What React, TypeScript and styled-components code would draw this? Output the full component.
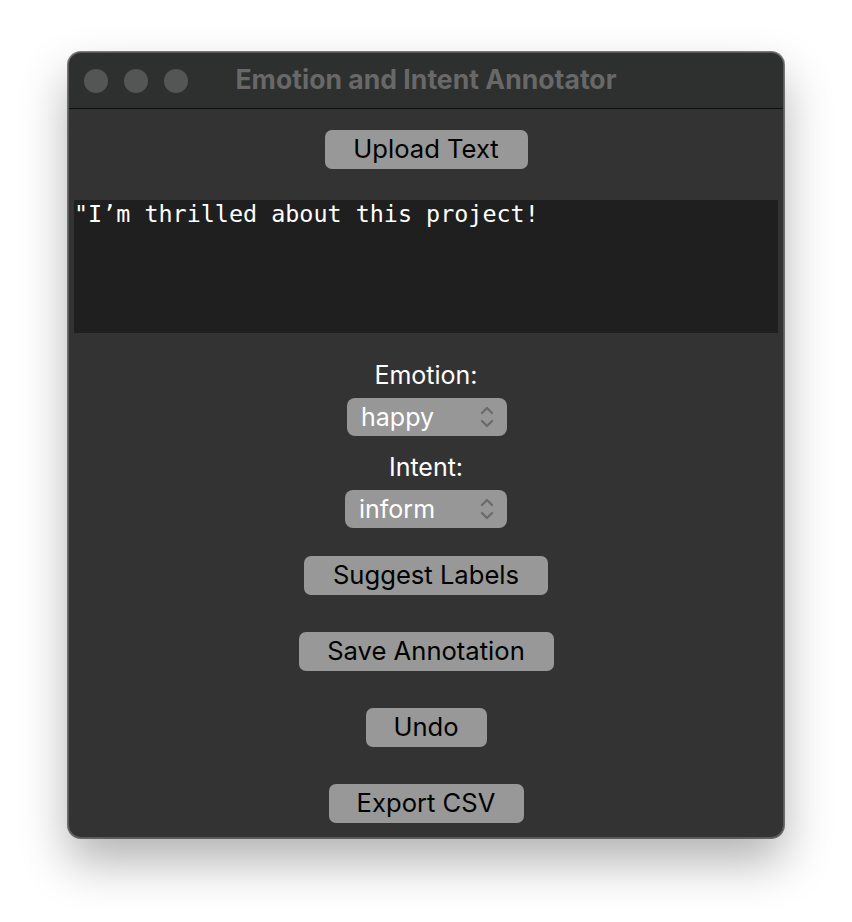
import styled, { createGlobalStyle } from "styled-components";

const GlobalStyle = createGlobalStyle`
  html, body {
    margin: 0;
    background: #ffffff;
  }
  body {
    font-family: Inter, "Liberation Sans", Arial, sans-serif;
  }
`;

const Page = styled.div`
  padding: 52px 0 0 68px;
  height: 922px;
  box-sizing: border-box;
`;

const Window = styled.div`
  width: 716px;
  height: 786px;
  box-sizing: border-box;
  border: 1px solid #5a5a5a;
  border-radius: 13px;
  background: #333333;
  overflow: hidden;
  box-shadow: 0 24px 48px rgba(0, 0, 0, 0.3), 0 0 0 1px rgba(0, 0, 0, 0.5);
  display: flex;
  flex-direction: column;
`;

const TitleBar = styled.div`
  height: 55px;
  flex: none;
  display: flex;
  align-items: center;
  background: #2e2f2f;
  border-bottom: 1px solid #0e0e0e;
`;

const Lights = styled.div`
  display: flex;
  gap: 16px;
  padding-left: 15px;
`;

const Light = styled.span`
  width: 24px;
  height: 24px;
  border-radius: 50%;
  background: #545555;
`;

const Title = styled.div`
  flex: 1;
  text-align: center;
  margin-left: -119px;
  margin-top: -3px;
  font-weight: bold;
  font-size: 26.6px;
  color: #686868;
`;

const Content = styled.div`
  display: flex;
  flex-direction: column;
  align-items: center;
  padding: 21px 5px 0;
`;

const Button = styled.button<{ $top: number; $width: number }>`
  margin-top: ${(p) => p.$top}px;
  width: ${(p) => p.$width}px;
  height: 39px;
  border: none;
  border-radius: 7px;
  background: #989898;
  color: #000000;
  font-family: Inter, "Liberation Sans", Arial, sans-serif;
  font-size: 25.6px;
  padding: 0 0 2px;
`;

const TextArea = styled.div`
  margin-top: 31px;
  align-self: stretch;
  height: 133px;
  background: #1f1f1f;
  color: #ffffff;
  font-family: "DejaVu Sans Mono", monospace;
  font-size: 23.4px;
  padding: 0;
  box-sizing: border-box;
  white-space: pre;
`;

const Label = styled.div<{ $top: number }>`
  margin-top: ${(p) => p.$top}px;
  height: 26px;
  line-height: 26px;
  color: #ffffff;
  font-size: 25px;
`;

const Select = styled.div<{ $width: number; $shift: number }>`
  margin-top: 10px;
  margin-left: ${(p) => p.$shift}px;
  width: ${(p) => p.$width}px;
  height: 38px;
  border-radius: 8px;
  background: #979797;
  color: #ffffff;
  font-size: 25px;
  display: flex;
  align-items: center;
  justify-content: space-between;
  padding: 0 13px 0 14px;
  box-sizing: border-box;
`;

const Chevrons = () => (
  <svg width="14" height="26" viewBox="0 0 14 26" fill="none">
    <path
      d="M2 9 L7 4 L12 9 M2 17 L7 22 L12 17"
      stroke="#6c6c6c"
      strokeWidth="2.4"
      strokeLinecap="round"
      strokeLinejoin="round"
    />
  </svg>
);

export default function App() {
  return (
    <>
      <GlobalStyle />
      <Page>
        <Window>
          <TitleBar>
            <Lights>
              <Light />
              <Light />
              <Light />
            </Lights>
            <Title>Emotion and Intent Annotator</Title>
          </TitleBar>
          <Content>
            <Button $top={0} $width={203}>Upload Text</Button>
            <TextArea>"I’m thrilled about this project!</TextArea>
            <Label $top={29}>Emotion:</Label>
            <Select $width={160} $shift={2}>
              <span>happy</span>
              <Chevrons />
            </Select>
            <Label $top={18}>Intent:</Label>
            <Select $width={162} $shift={0}>
              <span>inform</span>
              <Chevrons />
            </Select>
            <Button $top={28} $width={244}>Suggest Labels</Button>
            <Button $top={37} $width={255}>Save Annotation</Button>
            <Button $top={37} $width={121}>Undo</Button>
            <Button $top={37} $width={195}>Export CSV</Button>
          </Content>
        </Window>
      </Page>
    </>
  );
}
